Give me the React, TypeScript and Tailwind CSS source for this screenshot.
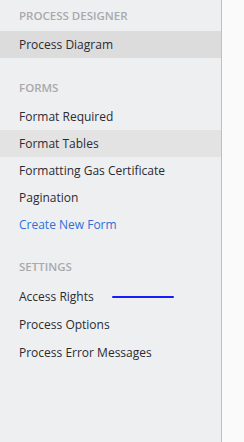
export default function App() {
  const Header = ({ children }: { children: string }) => (
    <div className="h-[31px] flex items-center pl-[19px] text-[11.5px] font-semibold text-[#a9a9ab]">
      {children}
    </div>
  );
  const Row = ({
    children,
    bg = "",
    color = "text-[#2b2b33]",
    h = "h-[27px]",
  }: {
    children: React.ReactNode;
    bg?: string;
    color?: string;
    h?: string;
  }) => (
    <div className={`${h} flex items-center pl-[19px] text-[12px] ${color} ${bg}`}>
      {children}
    </div>
  );
  return (
    <div
      className="w-[244px] h-[442px] flex bg-[#fafafa]"
      style={{ fontFamily: '"Open Sans", sans-serif' }}
    >
      <div className="w-[221px] h-full bg-[#eeeff1] border-r border-[#bfbfc1] box-content flex flex-col">
        <Header>PROCESS DESIGNER</Header>
        <Row bg="bg-[#dcdcdd]">Process Diagram</Row>
        <div className="mt-[14px]">
          <Header>FORMS</Header>
        </div>
        <Row>Format Required</Row>
        <Row bg="bg-[#e3e3e4]">Format Tables</Row>
        <Row>Formatting Gas Certificate</Row>
        <Row>Pagination</Row>
        <Row color="text-[#2f6fd6]">Create New Form</Row>
        <div className="mt-[13px]">
          <Header>SETTINGS</Header>
        </div>
        <Row h="h-[29px]">
          <span>Access Rights</span>
          <span className="ml-[18px] w-[62px] h-[2px] bg-[#1a1aff] rounded-full" />
        </Row>
        <Row h="h-[28px]">Process Options</Row>
        <Row h="h-[28px]">Process Error Messages</Row>
      </div>
    </div>
  );
}
